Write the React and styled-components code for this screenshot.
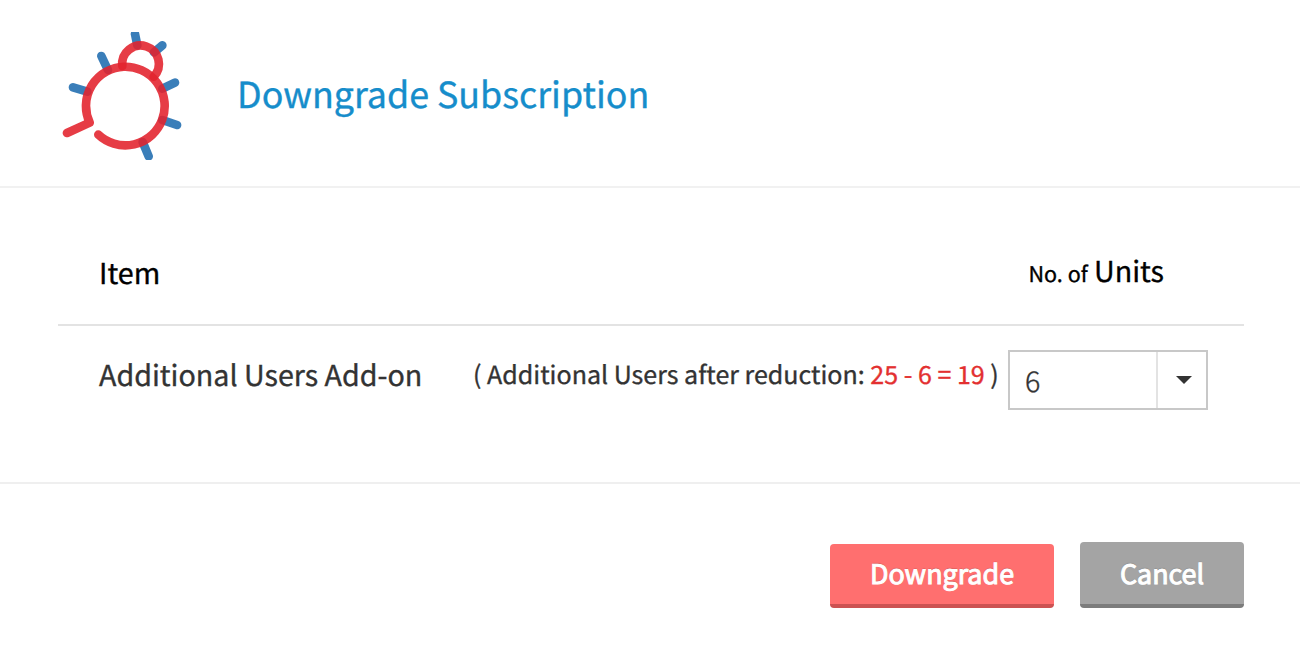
import { useState } from 'react';
import styled, { createGlobalStyle } from 'styled-components';

const TOTAL_USERS = 25;

function Logo() {
    return (
        <LogoSvg viewBox="30 36 366 384">
            <g stroke="#2e76b5" strokeOpacity="0.94">
                <path d="M255 42 L262 76" />
                <path d="M337 76 L312 97" />
                <path d="M154 108 L174 150" />
                <path d="M69 202 L112 215" />
                <path d="M375 188 L337 206" />
                <path d="M381 315 L337 300" />
                <path d="M296 409 L278 366" />
            </g>
            <g stroke="#e3242e" strokeOpacity="0.89">
                <path d="M51 339 L119 308 A118 118 0 1 1 145 344" />
                <path d="M217 138 A55 55 0 1 1 311 170" />
            </g>
        </LogoSvg>
    );
}

function App() {
    const [units] = useState(6);

    return (
        <Dialog>
            <GlobalStyle />
            <Header>
                <Logo />
                <Title>Downgrade Subscription</Title>
            </Header>

            <Content>
                <HeadRow>
                    <ItemHeading>Item</ItemHeading>
                    <UnitsHeading><small>No. of</small> Units</UnitsHeading>
                </HeadRow>
                <ItemRow>
                    <ItemName>Additional Users Add-on</ItemName>
                    <Note>
                        ( Additional Users after reduction: <em>{TOTAL_USERS} - {units} = {TOTAL_USERS - units}</em> )
                    </Note>
                    <Select>
                        <SelectValue>{units}</SelectValue>
                        <SelectArrow>
                            <Caret />
                        </SelectArrow>
                    </Select>
                </ItemRow>
            </Content>

            <Footer>
                <Button $primary>Downgrade</Button>
                <Button>Cancel</Button>
            </Footer>
        </Dialog>
    );
}

export default App;

const GlobalStyle = createGlobalStyle`
    body {
        margin: 0;
        background: #fff;
        color: #333;
        font-family: 'Noto Sans CJK SC', 'Noto Sans', sans-serif;
        text-rendering: geometricPrecision;
        -webkit-text-stroke: 0.35px;
    }
    * {
        box-sizing: border-box;
    }
`;

const Dialog = styled.div`
    width: 1300px;
    height: 660px;
    overflow: hidden;
`;

const Header = styled.div`
    display: flex;
    align-items: flex-start;
    height: 188px;
    padding: 32px 0 0 60px;
    border-bottom: 2px solid #f1f1f1;
`;

const LogoSvg = styled.svg`
    width: 122px;
    height: 128px;
    fill: none;
    stroke-width: 26;
    stroke-linecap: round;
    stroke-linejoin: round;
    filter: blur(0.6px);
`;

const Title = styled.h1`
    margin: 31px 0 0 55px;
    color: #168dcb;
    font-size: 35.8px;
    font-weight: 400;
    line-height: 60px;
    white-space: nowrap;
`;

const Content = styled.div`
    height: 296px;
    padding: 0 56px 0 58px;
    border-bottom: 2px solid #efefef;
`;

const HeadRow = styled.div`
    display: flex;
    justify-content: space-between;
    height: 138px;
    padding: 61px 80px 0 41px;
    border-bottom: 2px solid #e3e3e3;
    color: #000;
    line-height: 44px;
    white-space: nowrap;
`;

const ItemHeading = styled.div`
    padding-top: 2px;
    font-size: 28.65px;
`;

const UnitsHeading = styled.div`
    font-size: 28.65px;

    small {
        font-size: 21.5px;
    }
`;

const ItemRow = styled.div`
    display: flex;
    padding: 24px 0 0 41px;
    white-space: nowrap;
`;

const ItemName = styled.div`
    width: 374px;
    font-size: 28.65px;
    line-height: 50px;
`;

const Note = styled.div`
    width: 535px;
    font-size: 25.03px;
    line-height: 49px;

    em {
        color: #e33030;
        font-style: normal;
    }
`;

const Select = styled.div`
    display: flex;
    width: 200px;
    height: 60px;
    border: 2px solid #c8c8c8;
`;

const SelectValue = styled.div`
    flex: 1;
    padding-left: 15px;
    font-size: 28.65px;
    font-weight: 300;
    line-height: 57px;
`;

const SelectArrow = styled.div`
    display: flex;
    align-items: center;
    justify-content: center;
    width: 50px;
    border-left: 2px solid #e3e3e3;
    padding-left: 4px;
`;

const Caret = styled.span`
    border: 8px solid transparent;
    border-top-color: #333;
    border-bottom: 0;
`;

const Footer = styled.div`
    display: flex;
    justify-content: flex-end;
    align-items: flex-end;
    gap: 26px;
    height: 124px;
    padding-right: 56px;
`;

const Button = styled.button`
    width: ${({ $primary }) => ($primary ? 224 : 164)}px;
    height: ${({ $primary }) => ($primary ? 64 : 66)}px;
    padding: 0 0 ${({ $primary }) => ($primary ? 3 : 1)}px;
    border: 0;
    border-bottom: 4px solid ${({ $primary }) => ($primary ? '#cc5252' : '#7c7c7c')};
    border-radius: 4px;
    background: ${({ $primary }) => ($primary ? '#ff6f6f' : '#a4a4a4')};
    color: #fff;
    font-family: inherit;
    font-size: 26.86px;
    font-weight: 400;
    line-height: 56px;
    text-rendering: geometricPrecision;
    -webkit-text-stroke: 1px #fff;
    text-shadow: 0 -1px 1px rgba(0, 0, 0, 0.2);
    cursor: pointer;
`;
